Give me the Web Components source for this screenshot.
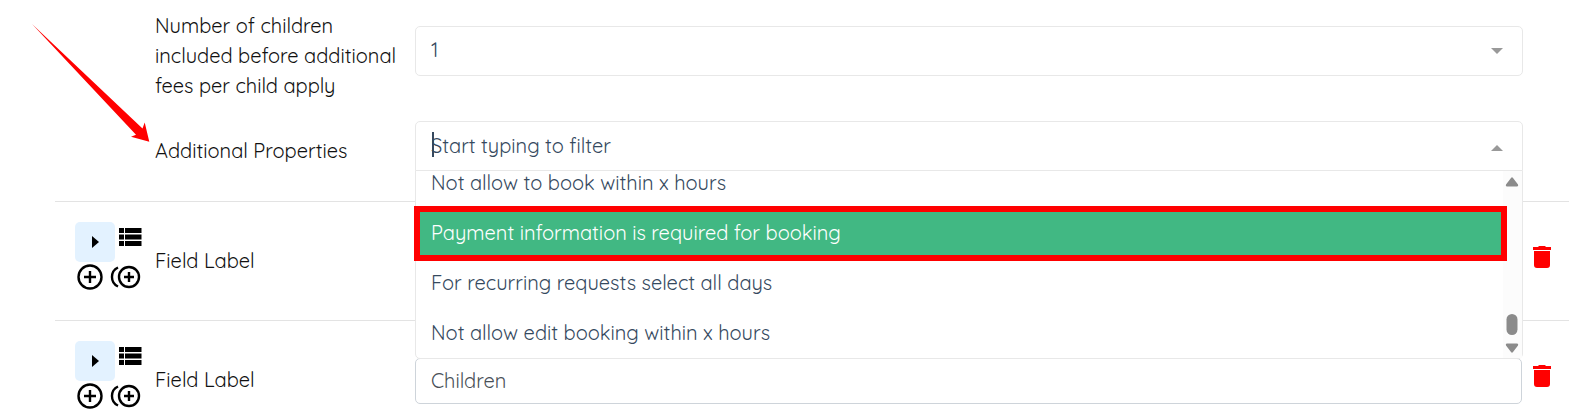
<!DOCTYPE html>
<html lang="en">
<head>
<meta charset="utf-8">
<meta name="viewport" content="width=device-width, initial-scale=1">
<title>Booking form fields</title>
<style>
  body {
    margin: 0;
    background: #fff;
    color: #111;
    font-family: Quicksand, Lato, sans-serif;
    font-size: 20px;
    line-height: 30px;
  }
</style>
</head>
<body>
<form-page>
  <form-group>
    <select-row value="1">Number of children included before additional fees per child apply</select-row>
    <filter-row placeholder="Start typing to filter">Additional Properties
      <list-option slot="options">Not allow to book within x hours</list-option>
      <list-option slot="options" active>Payment information is required for booking</list-option>
      <list-option slot="options">For recurring requests select all days</list-option>
      <list-option slot="options">Not allow edit booking within x hours</list-option>
    </filter-row>
  </form-group>
  <field-row>Field Label</field-row>
  <field-row value="Children">Field Label</field-row>
  <pointer-arrow slot="note"></pointer-arrow>
</form-page>

<script>
const define = (name, html, setup) => {
  const template = document.createElement('template');
  template.innerHTML = html;
  customElements.define(name, class extends HTMLElement {
    constructor() {
      super();
      this.attachShadow({ mode: 'open' }).append(template.content.cloneNode(true));
    }
    connectedCallback() {
      if (setup) setup(this, this.shadowRoot);
    }
  });
};

/* Shared column layout: tools, label, control, remove button */
const rowStyle = `
  * { box-sizing: border-box; }
  :host { display: grid; grid-template-columns: 80px 260px minmax(0, 1fr) 47px; padding-left: 20px; align-items: center; }
  label { grid-column: 2; padding-right: 15px; }
  .control { grid-column: 3; position: relative; }
  input, select { display: block; width: 100%; margin: 0; padding: 0 15px; font: inherit; background: #fff; outline: 0; appearance: none; }
`;
const selectStyle = `
  :host { grid-template-columns: 80px 260px minmax(0, 1fr) 46px; }
  .control { margin-bottom: 10px; }
  input, select { height: 50px; padding-bottom: 2px; border: 1px solid #e8e8e8; border-radius: 5px; color: #35495e; }
  .chevron { position: absolute; right: 20px; top: 22px; width: 12px; height: 6px; fill: #999; pointer-events: none; }
`;

define('form-page', `
  <style>
    :host { display: block; position: relative; padding: 1px 0 0 55px; overflow: hidden; }
  </style>
  <slot></slot><slot name="note"></slot>
`);

define('form-group', `
  <style>
    :host { display: flex; flex-direction: column; gap: 20px; padding: 10px 0 20px; }
  </style>
  <slot></slot>
`);

define('select-row', `
  <style>${rowStyle}${selectStyle}</style>
  <label for="control"><slot></slot></label>
  <div class="control">
    <select id="control"><option></option></select>
    <svg class="chevron" viewBox="0 0 12 6" aria-hidden="true"><path d="M0 0h12L6 6z"/></svg>
  </div>
`, (host, root) => {
  root.querySelector('option').textContent = host.getAttribute('value');
});

define('filter-row', `
  <style>${rowStyle}${selectStyle}
    :host { position: relative; z-index: 1; }
    input { border-radius: 5px 5px 0 0; }
    input::placeholder { color: #35495e; opacity: 1; }
    .chevron { top: 24px; }
    .caret { position: absolute; left: 17px; top: 11px; width: 2px; height: 25px; background: #35495e; }
    .menu { position: absolute; top: 49px; left: 0; right: 0; height: 189px; display: flex; background: #fff; border: 1px solid #e8e8e8; border-radius: 0 0 5px 5px; }
    .list { flex: 1; display: flex; flex-direction: column; justify-content: flex-end; overflow: hidden; }
    .bar { width: 19px; background: #fcfcfc; }
    .bar svg { display: block; fill: #8b8b8b; }
    .mark { position: absolute; left: -2px; right: 15px; top: 35px; height: 55px; border: 6px solid #f00; }
  </style>
  <label for="control"><slot></slot></label>
  <div class="control">
    <input id="control" type="text" role="combobox" aria-expanded="true" aria-controls="list" autocomplete="off">
    <span class="caret"></span>
    <svg class="chevron" viewBox="0 0 12 6" aria-hidden="true"><path d="M0 6h12L6 0z"/></svg>
    <div class="menu">
      <div class="list" id="list" role="listbox"><slot name="options"></slot></div>
      <div class="bar">
        <svg width="18" height="186" viewBox="0 0 18 186" aria-hidden="true">
          <path d="M8 7q1-1.500 2 0l5 6.500q.8 2-1 2H4q-1.800 0-1-2z"/>
          <rect x="3.500" y="143" width="11" height="21" rx="5.500"/>
          <path d="M8 181q1 1.500 2 0l5-6.500q.8-2-1-2H4q-1.800 0-1 2z"/>
        </svg>
      </div>
      <div class="mark"></div>
    </div>
  </div>
`, (host, root) => {
  root.querySelector('input').placeholder = host.getAttribute('placeholder');
});

define('list-option', `
  <style>
    :host { display: block; flex: none; box-sizing: border-box; height: 50px; padding: 10px 15px; color: #35495e; white-space: nowrap; }
    :host([active]) { background: #41b883; color: #fff; }
  </style>
  <slot></slot>
`, host => host.setAttribute('role', 'option'));

define('field-row', `
  <style>${rowStyle}
    :host { border-top: 1px solid #e3e3e3; padding-top: 20px; padding-bottom: 20px; }
    .control { margin-top: 2px; }
    input { height: 46px; padding-bottom: 2px; border: 1px solid #ced4da; border-radius: 5px; color: #495057; }
    .tools { display: grid; grid-template-columns: 40px 30px; height: 78px; grid-template-rows: 40px 30px; }
    button { display: grid; place-items: center; margin: 0; padding: 0; border: 0; background: none; color: inherit; }
    .toggle { background: #e3f2ff; border-radius: 5px; }
    svg { display: block; overflow: visible; }
    .tools svg { color: #000; }
    .remove { width: 40px; height: 40px; color: #f00; }
  </style>
  <div class="tools">
    <button class="toggle" type="button" aria-label="Expand">
      <svg width="40" height="40" fill="currentColor"><path d="M17 14l7 6-7 6z"/></svg>
    </button>
    <button type="button" aria-label="List">
      <svg width="30" height="40" fill="currentColor"><path d="M4 6h5v5H4zM10 6h16.500v5H10zM4 12.500h5v5H4zM10 12.500h16.500v5H10zM4 19h5v5H4zM10 19h16.500v5H10z"/></svg>
    </button>
    <button type="button" aria-label="Add">
      <svg width="40" height="30" fill="none" stroke="currentColor" stroke-width="2.400"><circle cx="15" cy="15" r="11.500"/><path d="M15 9v12M9 15h12"/></svg>
    </button>
    <button type="button" aria-label="Duplicate">
      <svg width="30" height="30" fill="none" stroke="currentColor" stroke-width="2.400"><circle cx="14" cy="15" r="10"/><path d="M14 10v10M9 15h10M3 5.500a10.500 10.500 0 0 0 0 19"/></svg>
    </button>
  </div>
  <label for="control"><slot></slot></label>
  <div class="control"><input id="control" type="text"></div>
  <button class="remove" type="button" aria-label="Remove">
    <svg width="40" height="40" fill="currentColor"><path d="M11 6h5l1-1h6l1 1h5v3H11zM12 10h16v14q0 3-3 3H15q-3 0-3-3z"/></svg>
  </button>
`, (host, root) => {
  root.querySelector('input').value = host.getAttribute('value') || '';
});

define('pointer-arrow', `
  <style>
    :host { display: block; position: absolute; left: 32px; top: 24px; pointer-events: none; }
    svg { display: block; }
  </style>
  <svg width="118" height="118" viewBox="0 0 118 118" fill="#f00" aria-hidden="true">
    <path d="M0 0L110.500 104.500L112.700 98.500L117.300 117.700L99 112.700L104 110.800z"/>
  </svg>
`);
</script>
</body>
</html>
